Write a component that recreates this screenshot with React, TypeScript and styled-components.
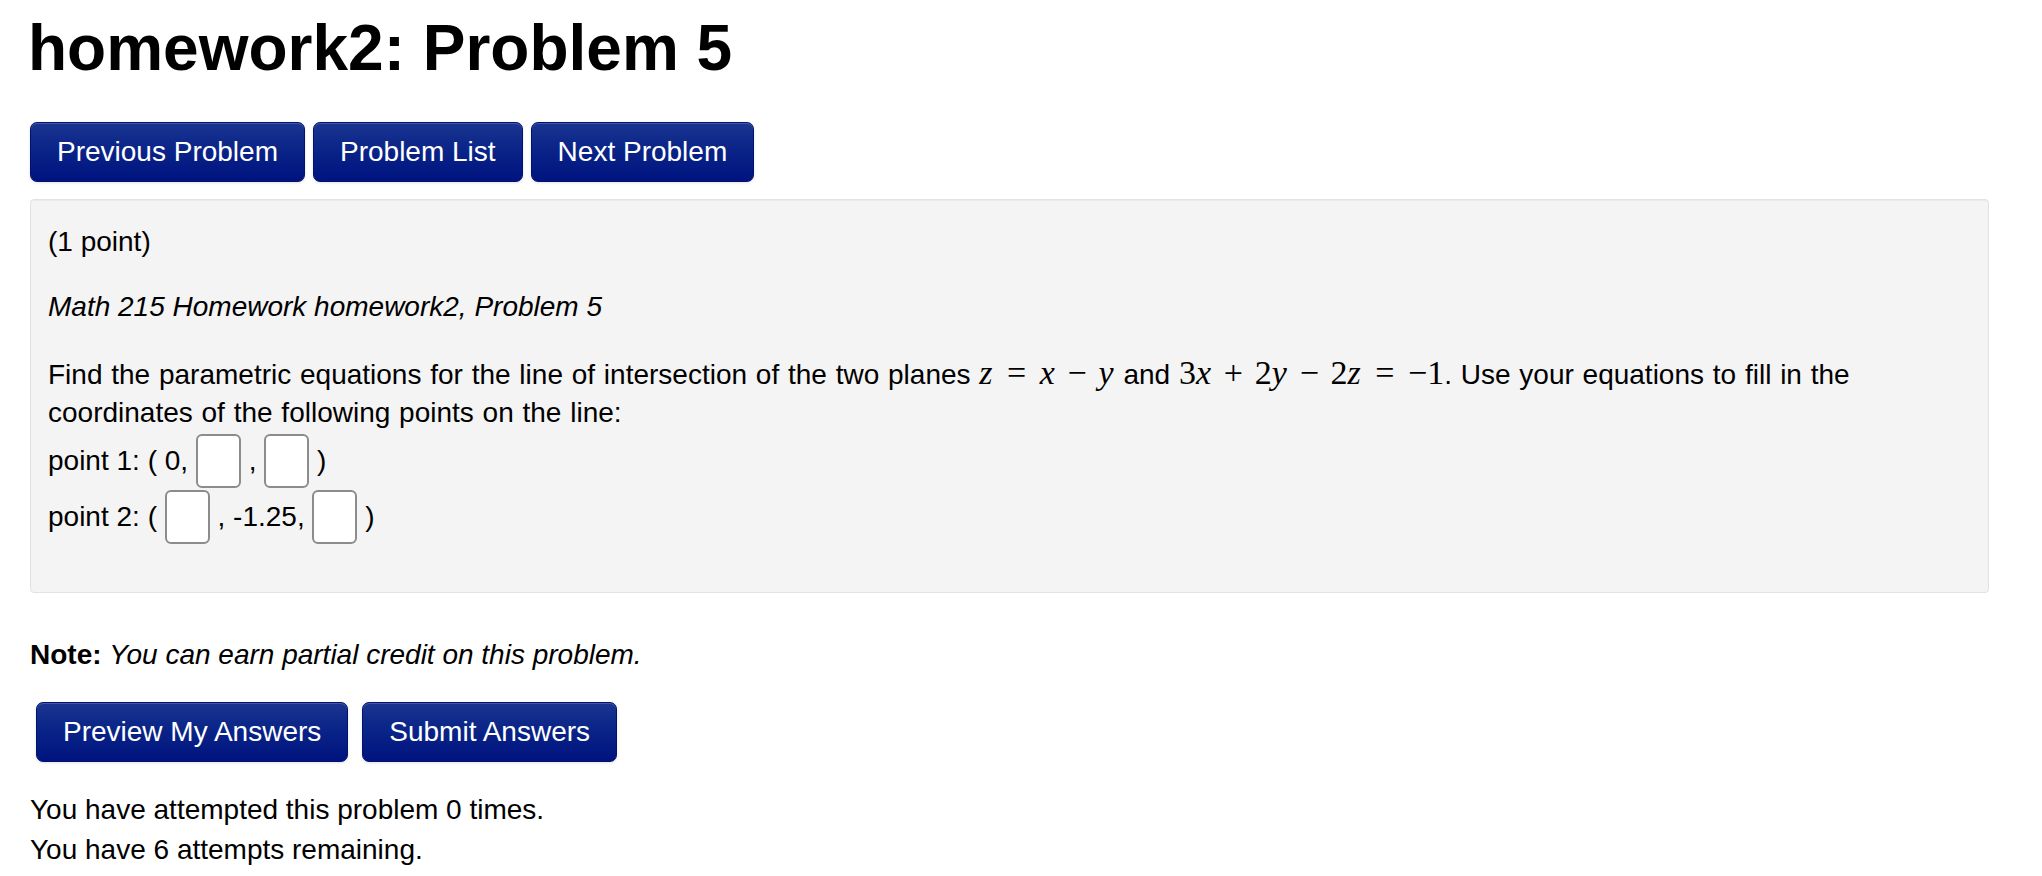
import React from "react";
import styled, { createGlobalStyle } from "styled-components";

const GlobalStyle = createGlobalStyle`
  html, body {
    margin: 0;
    padding: 0;
    background: #ffffff;
  }
  body {
    font-family: "Liberation Sans", Arial, Helvetica, sans-serif;
    font-size: 28px;
    color: #000;
  }
`;

const Page = styled.div`
  padding: 13px 53px 0 30px;
  width: 1959px;
`;

const Title = styled.h1`
  margin: 0 0 0 -2px;
  font-size: 64px;
  line-height: 70px;
  font-weight: 700;
`;

const ButtonRow = styled.div<{ $gap: number; $indent?: number }>`
  display: flex;
  gap: ${(p) => p.$gap}px;
  padding-left: ${(p) => p.$indent ?? 0}px;
`;

const NavRow = styled(ButtonRow)`
  margin-top: 39px;
`;

const SubmitRow = styled(ButtonRow)`
  margin-top: 27px;
`;

const Button = styled.button`
  font-family: inherit;
  font-size: 28px;
  line-height: 38px;
  padding: 10px 26px;
  color: #fff;
  border: 1px solid #021273;
  border-radius: 7px;
  background: linear-gradient(to bottom, #1a3590 0%, #0a2488 45%, #00137f 100%);
  box-shadow: inset 0 1px 0 rgba(255, 255, 255, 0.18), 0 1px 3px rgba(0, 0, 0, 0.12);
  cursor: pointer;
  white-space: nowrap;
`;

const Well = styled.div`
  margin-top: 17px;
  background: #f4f4f4;
  border: 1px solid #e2e2e2;
  border-radius: 4px;
  box-shadow: inset 0 1px 1px rgba(0, 0, 0, 0.04);
  padding: 23px 17px 48px 17px;
`;

const Line = styled.div<{ $gap?: number; $italic?: boolean }>`
  line-height: 38px;
  margin-top: ${(p) => p.$gap ?? 0}px;
  font-style: ${(p) => (p.$italic ? "italic" : "normal")};
`;

const Statement = styled(Line)`
  word-spacing: 1px;
`;

const AnswerBlank = styled.input.attrs({ type: "text" })`
  box-sizing: border-box;
  width: 45px;
  height: 54px;
  margin: 2px 0 0;
  padding: 0 4px;
  font-family: inherit;
  font-size: 28px;
  vertical-align: baseline;
  background: #fff;
  border: 2px solid #8c8c8c;
  border-radius: 6px;
  outline: none;
`;

// inline TeX-like formula, spaced roughly as MathJax does
const MathSpan = styled.span`
  font-family: "Liberation Serif", "Times New Roman", serif;
  font-size: 34px;
  line-height: 1;
  white-space: nowrap;
  word-spacing: 0;
`;

const MathVar = styled.i`
  font-style: italic;
  padding-right: 1px;
`;

const MathOp = styled.span<{ $rel?: boolean }>`
  display: inline-block;
  width: 0.778em;
  text-align: center;
  margin: 0 ${(p) => (p.$rel ? "0.29em" : "0.24em")};
`;

const Note = styled.div`
  margin-top: 42px;
  line-height: 40px;
`;

const Attempts = styled.div`
  margin-top: 28px;
  line-height: 40px;
`;

function Var({ c }: { c: string }) {
  return <MathVar>{c}</MathVar>;
}

export default function App() {
  return (
    <>
      <GlobalStyle />
      <Page>
        <Title>homework2: Problem 5</Title>

        <NavRow $gap={8}>
          <Button>Previous Problem</Button>
          <Button>Problem List</Button>
          <Button>Next Problem</Button>
        </NavRow>

        <Well>
          <Line>(1 point)</Line>
          <Line $gap={27} $italic>
            Math 215 Homework homework2, Problem 5
          </Line>
          <Statement $gap={30}>
            Find the parametric equations for the line of intersection of the two planes{" "}
            <MathSpan>
              <Var c="z" />
              <MathOp $rel>=</MathOp>
              <Var c="x" />
              <MathOp>−</MathOp>
              <Var c="y" />
            </MathSpan>{" "}
            and{" "}
            <MathSpan>
              3<Var c="x" />
              <MathOp>+</MathOp>
              2<Var c="y" />
              <MathOp>−</MathOp>
              2<Var c="z" />
              <MathOp $rel>=</MathOp>
              −1
            </MathSpan>
            . Use your equations to fill in the
            <br />
            coordinates of the following points on the line:
          </Statement>
          <Line>
            point 1: ( 0, <AnswerBlank /> , <AnswerBlank /> )
          </Line>
          <Line>
            point 2: ( <AnswerBlank /> , -1.25, <AnswerBlank /> )
          </Line>
        </Well>

        <Note>
          <b>Note:</b> <i>You can earn partial credit on this problem.</i>
        </Note>

        <SubmitRow $gap={14} $indent={6}>
          <Button>Preview My Answers</Button>
          <Button>Submit Answers</Button>
        </SubmitRow>

        <Attempts>
          You have attempted this problem 0 times.
          <br />
          You have 6 attempts remaining.
        </Attempts>
      </Page>
    </>
  );
}
